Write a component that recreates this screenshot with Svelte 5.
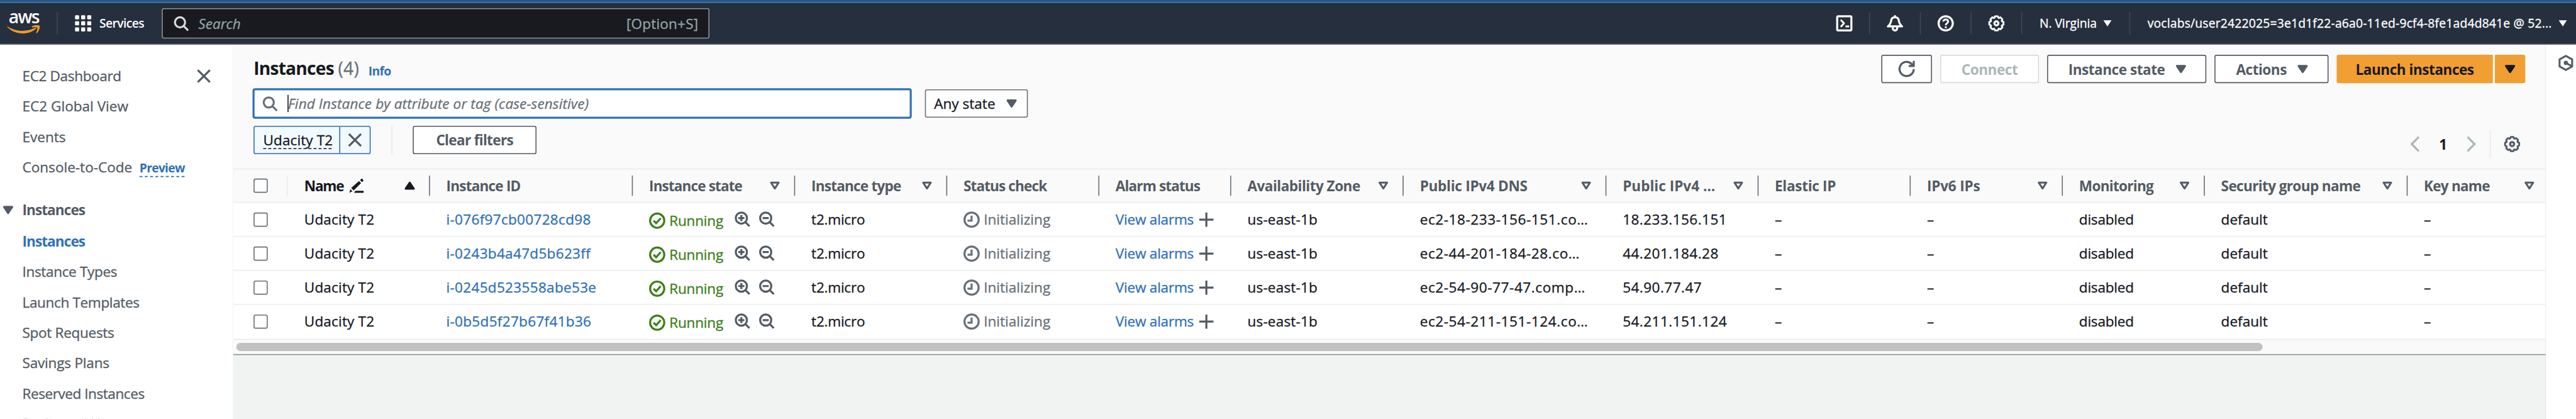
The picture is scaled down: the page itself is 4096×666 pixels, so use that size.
<script>
  const links = [
    ['Instances', -1.15], ['Instance Types', -0.45], ['Launch Templates', -0.45], ['Spot Requests', -0.4],
    ['Savings Plans', -0.25], ['Reserved Instances', -0.57], ['Dedicated Hosts', -0.5]
  ];
  const columns = [
    { label: 'Name', w: 280, edit: true, sort: 'asc', ls: -1.5 },
    { label: 'Instance ID', w: 400, ls: -1 },
    { label: 'Instance state', w: 320, sort: 'none', ls: -1.1 },
    { label: 'Instance type', w: 300, sort: 'none', ls: -1 },
    { label: 'Status check', w: 300, ls: -1.1 },
    { label: 'Alarm status', w: 260, ls: -1.1 },
    { label: 'Availability Zone', w: 340, sort: 'none', ls: -0.65 },
    { label: 'Public IPv4 DNS', w: 400, sort: 'none', ls: -0.35 },
    { label: 'Public IPv4 ...', w: 300, sort: 'none', ls: 0 },
    { label: 'Elastic IP', w: 300, ls: -0.4 },
    { label: 'IPv6 IPs', w: 300, sort: 'none', ls: -0.25 },
    { label: 'Monitoring', w: 280, sort: 'none', ls: -0.9 },
    { label: 'Security group name', w: 400, sort: 'none', ls: -0.8 },
    { label: 'Key name', w: 280, sort: 'none', ls: -1 }
  ];
  const grid = '108px ' + columns.map((c) => c.w + 'px').join(' ');
  const rows = [
    { id: 'i-076f97cb00728cd98', dns: 'ec2-18-233-156-151.co…', ip: '18.233.156.151' },
    { id: 'i-0243b4a47d5b623ff', dns: 'ec2-44-201-184-28.co…', ip: '44.201.184.28' },
    { id: 'i-0245d523558abe53e', dns: 'ec2-54-90-77-47.comp…', ip: '54.90.77.47' },
    { id: 'i-0b5d5f27b67f41b36', dns: 'ec2-54-211-151-124.co…', ip: '54.211.151.124' }
  ];
  // Eight-toothed cog outline, centred in a 16-unit box.
  const cog = Array.from({ length: 8 }, (_, k) =>
    [[-21, 5.8], [-11, 7.1], [11, 7.1], [21, 5.8]].map(([a, r]) => {
      const t = ((k * 45 + a) * Math.PI) / 180;
      return (8 + r * Math.cos(t)).toFixed(2) + ',' + (8 + r * Math.sin(t)).toFixed(2);
    }).join(' ')
  ).join(' ');
</script>

{#snippet gear()}
  <svg class="i32" viewBox="0 0 16 16" fill="none" stroke="currentColor" stroke-width="1.8" stroke-linejoin="round">
    <polygon points={cog} />
    <circle cx="8" cy="8" r="2" stroke-width="2" />
  </svg>
{/snippet}
{#snippet cross()}
  <svg class="i32" viewBox="0 0 16 16" fill="none" stroke="currentColor" stroke-width="2"><path d="M2 2l12 12M14 2L2 14" /></svg>
{/snippet}
{#snippet search()}
  <svg class="i32" viewBox="0 0 16 16" fill="none" stroke="currentColor" stroke-width="2"><circle cx="7" cy="7" r="5" /><path d="M10.5 10.500L15 15" /></svg>
{/snippet}
{#snippet down()}
  <svg class="i32" viewBox="0 0 16 16" fill="currentColor" stroke="currentColor" stroke-width="2" stroke-linejoin="round"><path d="M4 5h8l-4 6z" /></svg>
{/snippet}

<div class="window">
  <div class="page">
    <div class="strip"></div>
    <header>
      <div class="logo">
        <span>aws</span>
        <svg viewBox="0 0 64 22" fill="#f0982c"><path d="M0 2C16 13 38 13 54 5c2-1 3 .8 1.500 2C40 20 15 19 0 4c-1-1-.8-2.500 0-2z" /><path d="M48 2c4-3 12-3 15-1.500 1.500 2-.5 10-5 14.500-1 1-2 .3-1.500-.8C58 10 59.500 6 58.500 4.500S51 3.600 48.800 3.800c-1 0-1.600-1.200-.8-1.800z" /></svg>
      </div>
      <i class="bar"></i>
      <svg class="i32 apps" viewBox="0 0 32 32" fill="#fff">
        {#each [0, 12, 24] as y}{#each [0, 12, 24] as x}<rect {x} {y} width="8" height="8" rx="1.500" />{/each}{/each}
      </svg>
      <b class="services">Services</b>
      <div class="global-search">{@render search()}<em>Search</em><span>[Option+S]</span></div>
      <div class="tools">
        <svg class="i32" viewBox="0 0 16 16" fill="none" stroke="#fff" stroke-width="2" stroke-linejoin="round"><rect x="1" y="1" width="14" height="14" rx="1" /><path d="M4.500 4.500L7.700 8l-3.200 3.500M9.200 11h3.600" stroke-width="1.800" /></svg>
        <i class="bar"></i>
        <svg class="i32" viewBox="0 0 16 16" fill="none" stroke="#fff" stroke-width="2" stroke-linejoin="round"><path d="M8 0v2M1 11h14c-2-1.500-2.800-3-3.200-5.500C11.500 3.200 10 2 8 2S4.500 3.200 4.200 5.500C3.800 8 3 9.500 1 11zM5.800 11.500v1.300a2.200 2.200 0 0 0 4.400 0v-1.300" /></svg>
        <i class="bar"></i>
        <svg class="i32" viewBox="0 0 16 16" fill="none" stroke="#fff" stroke-width="2"><circle cx="8" cy="8" r="7" /><path d="M5.600 6.200c0-1.300 1.100-2 2.400-2s2.400.7 2.400 2c0 1.700-2.300 1.700-2.300 3.700M8.100 11v1.800" stroke-width="1.800" /></svg>
        <i class="bar"></i>
        {@render gear()}
        <i class="bar"></i>
      </div>
      <span class="region">N. Virginia</span>
      <svg class="tri" viewBox="0 0 16 12" fill="#fff"><path d="M0 0h16L8 12z" /></svg>
      <i class="bar b2"></i>
      <span class="account">voclabs/user2422025=3e1d1f22-a6a0-11ed-9cf4-8fe1ad4d841e @ 52...</span>
      <svg class="tri" viewBox="0 0 16 12" fill="#fff"><path d="M0 0h16L8 12z" /></svg>
    </header>

    <div class="body">
      <nav>
        <div class="item first"><span>EC2 Dashboard</span>{@render cross()}</div>
        <div class="item">EC2 Global View</div>
        <div class="item">Events</div>
        <div class="item">Console-to-Code <b class="preview">Preview</b></div>
        <div class="group">{@render down()}<b>Instances</b></div>
        {#each links as [label, ls], n}<div class="item" class:active={n === 0} style:letter-spacing="{ls}px">{label}</div>{/each}
      </nav>

      <main>
        <section class="panel">
          <div class="toprow">
            <h1>Instances <span>(4)</span></h1><b class="info">Info</b>
            <div class="actions">
              <button class="refresh"><svg class="i32" viewBox="0 0 16 16" fill="none" stroke="currentColor" stroke-width="2"><path d="M15 8a7 7 0 1 1-2-4.900L15 5M15 0v5h-5" /></svg></button>
              <button class="off" style:width="195px">Connect</button>
              <button class="menu" style:width="314px">Instance state {@render down()}</button>
              <button class="menu" style:width="225px">Actions {@render down()}</button>
              <div class="split"><button style:width="308px">Launch instances</button><button style:width="60px">{@render down()}</button></div>
            </div>
          </div>
          <div class="filters">
            <div class="find">{@render search()}<i class="caret"></i><em>Find Instance by attribute or tag (case-sensitive)</em></div>
            <button class="state"><span>Any state</span>{@render down()}</button>
          </div>
          <div class="tokens">
            <div class="token"><span><u>Udacity T2</u></span><span class="x">{@render cross()}</span></div>
            <i class="sep"></i>
            <button class="clear">Clear filters</button>
            <div class="pager">
              <svg class="i32" viewBox="0 0 16 16" fill="none" stroke="#aab7b8" stroke-width="2"><path d="M12 1L5 8l7 7" /></svg>
              <b>1</b>
              <svg class="i32" viewBox="0 0 16 16" fill="none" stroke="#aab7b8" stroke-width="2"><path d="M4 1l7 7-7 7" /></svg>
              <i class="sep"></i>
              {@render gear()}
            </div>
          </div>

          <div class="row head" style:grid-template-columns={grid}>
            <div class="check"><i></i></div>
            {#each columns as c}
              <div class="cell" class:dark={c.edit}>
                <b style:letter-spacing="{c.ls}px">{c.label}</b>
                {#if c.edit}<svg class="pencil" viewBox="0 0 28 28" fill="currentColor"><path d="M12 24h16v4H9zM2 21l4 4-6 3zM3.500 18.500L19 5l4 4L8.500 23.500zM21 3l2.500-2.500c1.500-1 5 2.500 4 4L25 7z" /></svg>{/if}
                {#if c.sort}
                  <svg class="sort" viewBox="0 0 20 16" stroke="currentColor" stroke-linejoin="round" stroke-width="3.800" fill={c.sort === 'asc' ? 'currentColor' : 'none'}>
                    {#if c.sort === 'asc'}<path d="M2 14h16L10 2z" />{:else}<path d="M2.500 2h15L10 13.500z" />{/if}
                  </svg>
                {/if}
              </div>
            {/each}
          </div>

          {#each rows as r}
            <div class="row data" style:grid-template-columns={grid}>
              <div class="check"><i></i></div>
              <div class="cell wide">Udacity T2</div>
              <div class="cell link id">{r.id}</div>
              <div class="cell run">
                <svg class="i32" viewBox="0 0 16 16" fill="none" stroke="currentColor" stroke-width="2"><circle cx="8" cy="8" r="7" /><path d="M4.500 8L7 10.500l4.500-5" /></svg>
                <span>Running</span>
                <svg class="i32 mag z1" viewBox="0 0 16 16" fill="none" stroke="currentColor" stroke-width="2"><circle cx="7" cy="7" r="5.500" /><path d="M11 11l4 4M4 7h6M7 4v6" /></svg>
                <svg class="i32 mag" viewBox="0 0 16 16" fill="none" stroke="currentColor" stroke-width="2"><circle cx="7" cy="7" r="5.500" /><path d="M11 11l4 4M4 7h6" /></svg>
              </div>
              <div class="cell tight">t2.micro</div>
              <div class="cell init">
                <svg class="i32" viewBox="0 0 16 16" fill="none" stroke="currentColor" stroke-width="2"><circle cx="8" cy="8" r="7" /><path d="M8 4v5H4" /></svg>
                <span>Initializing</span>
              </div>
              <div class="cell link tight">View alarms <svg class="plus" viewBox="0 0 28 28" stroke="#545b64" stroke-width="4"><path d="M14 0v28M0 14h28" /></svg></div>
              <div class="cell wide">us-east-1b</div>
              <div class="cell dns">{r.dns}</div>
              <div class="cell ip">{r.ip}</div>
              <div class="cell">–</div>
              <div class="cell">–</div>
              <div class="cell tight">disabled</div>
              <div class="cell">default</div>
              <div class="cell">–</div>
            </div>
          {/each}
          <div class="scroll"><div></div></div>
        </section>
      </main>

      <aside>
        <svg class="i32" viewBox="0 0 16 16" fill="none" stroke="currentColor" stroke-width="1.900" stroke-linejoin="round"><path d="M8 1.100l6.200 3.400v7L8 14.900 1.800 11.500v-7z" /><circle cx="8" cy="8" r="1.600" fill="currentColor" stroke-width="1" /><path d="M8 8l5.500 3" /></svg>
      </aside>
    </div>
  </div>
</div>

<style>
  .window { width: 4096px; height: 666px; overflow: hidden; }
  .page { width: 5080px; height: 826px; overflow: hidden; transform: scale(0.8063); transform-origin: 0 0; font: 28px/40px 'Open Sans', sans-serif; color: #16191f; background: #f1f3f3; display: flex; flex-direction: column; -webkit-text-stroke: 0.4px; }
  .page * { box-sizing: border-box; }
  b, h1, button { -webkit-text-stroke: 0; }
  svg { display: block; flex: none; overflow: visible; }
  .i32 { width: 32px; height: 32px; }
  em { font-style: italic; }
  button { font: 700 28px/40px 'Open Sans', sans-serif; color: #545b64; background: #fff; border: 2px solid #545b64; border-radius: 4px; height: 56px; padding: 0; margin: 0; display: flex; align-items: center; justify-content: center; gap: 16px; letter-spacing: -0.6px; white-space: nowrap; flex: none; }
  .menu { padding-left: 8px; }
  .strip { height: 6px; flex: none; background: #25588b; border-bottom: 2px solid #4f7aa3; }
  header { height: 82px; flex: none; background: #262f3e; border-bottom: 2px solid #545b64; display: flex; align-items: center; color: #fff; font-size: 24px; white-space: nowrap; }
  .bar { width: 2px; height: 44px; background: #414750; flex: none; }
  .logo { width: 96px; padding-left: 15px; height: 80px; display: flex; flex-direction: column; padding-top: 12px; flex: none; margin-right: 16px; }
  .logo span { font: 600 35px/30px 'Open Sans', sans-serif; letter-spacing: -2px; padding-left: 2px; -webkit-text-stroke: 0; }
  .logo svg { width: 64px; height: 22px; margin-top: 2px; }
  .apps { margin: 0 16px 0 34px; }
  .services { font-weight: 600; width: 123px; letter-spacing: -0.8px; }
  .global-search { width: 1080px; height: 60px; border: 2px solid #879596; border-radius: 4px; background: #181a1f; display: flex; align-items: center; font-size: 28px; color: #95a5a6; padding: 0 20px; flex: none; }
  .global-search :global(svg) { color: #d5dbdb; margin-right: 18px; }
  .global-search span { margin-left: auto; letter-spacing: 0.2px; }
  .tools { margin-left: 2222px; display: flex; align-items: center; gap: 33px; flex: none; }
  .region { margin-left: 34px; width: 126px; letter-spacing: -0.1px; }
  .tri { width: 16px; height: 12px; }
  .b2 { margin-left: 35px; }
  .account { margin-left: 34px; width: 811px; letter-spacing: 0.2px; }

  .body { flex: 1; display: flex; min-height: 0; }
  nav { width: 460px; flex: none; background: #fff; padding-top: 31px; color: #545b64; height: 738px; overflow: hidden; }
  .item { height: 60px; padding: 10px 44px 0; white-space: nowrap; }
  .first { display: flex; justify-content: space-between; letter-spacing: -0.45px; }
  .first :global(svg) { margin: 5px -2px 0 0; }
  .preview { display: inline-block; font-size: 24px; line-height: 36px; color: #2f71b8; border-bottom: 2px dashed; margin-left: 7px; height: 36px; letter-spacing: -0.95px; }
  .active { color: #2f71b8; font-weight: 700; -webkit-text-stroke: 0; }
  .group { display: flex; height: 86px; padding-top: 34px; letter-spacing: -1.15px; }
  .group :global(svg) { margin: 5px 12px 0 0; }
  main { width: 4560px; flex: none; box-shadow: 0 0 2px #555; z-index: 1; overflow: hidden; background: #f1f3f3; }
  .panel { height: 612px; background: #fafafa; border-bottom: 2px solid #879196; overflow: hidden; width: 4560px; }
  .toprow { display: flex; height: 76px; padding: 20px 40px 0; }
  h1 { font: 700 35px/44px 'Open Sans', sans-serif; margin: 0; padding-top: 4px; letter-spacing: -1px; }
  h1 span { font-weight: 400; color: #687078; letter-spacing: 0.4px; -webkit-text-stroke: 0.4px; }
  .info { font-size: 24px; color: #2f71b8; margin: 12px 0 0 18px; letter-spacing: -0.8px; }
  .actions { margin-left: auto; display: flex; gap: 16px; height: 56px; }
  .refresh { width: 100px; }
  .off { border-color: #d5dbdb; color: #aab7b8; }
  .split { display: flex; gap: 4px; }
  .split button { background: #f19e33; border: 0; color: #16191f; border-radius: 4px 0 0 4px; }
  .split button:last-child { border-radius: 0 4px 4px 0; }
  .filters { padding: 10px 38px 0; display: flex; gap: 26px; height: 84px; }
  .find { width: 1300px; height: 60px; background: #fff; border: 4px solid #2f71b8; border-radius: 5px; display: flex; align-items: center; color: #687078; padding-left: 14px; letter-spacing: 0.12px; }
  .caret { width: 2px; height: 34px; background: #16191f; margin: 0 -1px 0 19px; }
  .state { margin-top: 2px; width: 203px; font-weight: 400; color: #16191f; border-color: #687078; justify-content: space-between; padding: 0 16px; letter-spacing: 0; -webkit-text-stroke: 0.4px; }
  .state :global(svg) { color: #545b64; }
  .tokens { display: flex; padding: 0 40px; height: 84px; }
  .token { display: flex; width: 231px; height: 56px; border: 2px solid #2f71b8; border-radius: 4px; background: #f2f9ff; }
  .token span { flex: 1; padding: 6px 0 0 17px; }
  .token u { text-decoration: none; display: block; width: 135px; height: 38px; border-bottom: 2px dashed #16191f; white-space: nowrap; letter-spacing: 0.1px; }
  .token .x { flex: none; width: 60px; border-left: 2px solid #2f71b8; padding: 10px 13px; color: #545b64; }
  .sep { width: 2px; height: 56px; background: #e6e9e9; margin: 0 40px 0 41px; flex: none; }
  .clear { width: 244px; letter-spacing: -0.85px; }
  .pager { margin-left: auto; display: flex; align-items: center; height: 56px; margin-top: 8px; margin-right: 10px; color: #545b64; }
  .pager b { color: #16191f; margin: 0 32px; }
  .pager .sep { margin: 0 26px 0 20px; }

  .row { display: grid; width: 5000px; background: #fff; border-bottom: 2px solid #eaebeb; height: 67px; }
  .data:nth-last-child(2) { height: 69px; }
  .head { background: #fafafa; border-top: 2px solid #eaebeb; height: 68px; color: #545b64; }
  .head .check { border-right: 2px solid #eaeded; height: 40px; margin-top: 12px; padding-top: 6px; }
  .check { padding: 19px 0 0 40px; }
  .check i { display: block; width: 28px; height: 28px; border: 2px solid #687078; border-radius: 4px; background: #fff; }
  .cell { padding: 12px 0 0 32px; white-space: nowrap; min-width: 0; display: flex; }
  .head .cell { height: 40px; margin-top: 12px; padding: 0 28px 0 32px; border-right: 2px solid #687078; align-items: center; }
  .head .dark { color: #16191f; }
  .pencil { width: 28px; height: 28px; margin-left: 11px; }
  .sort { width: 20px; height: 16px; margin-left: auto; }
  .link { color: #2f71b8; }
  .wide { letter-spacing: 0.2px; }
  .tight { letter-spacing: -0.3px; }
  .id { letter-spacing: 0.35px; }
  .dns { letter-spacing: 0.7px; }
  .ip { letter-spacing: 0.55px; }
  .run { color: #3b8019; padding-top: 14px; letter-spacing: -0.3px; }
  .run > svg:first-child { margin: 5px 8px 0 0; }
  .mag { color: #545b64; margin: 2px 0 0 16px; }
  .z1 { margin-left: 22px; }
  .init { color: #687078; }
  .init svg { margin: 5px 8px 0 0; }
  .plus { width: 28px; height: 28px; margin: 7px 0 0 11px; }
  .scroll { padding: 6px 0 0 6px; }
  .scroll div { width: 3996px; height: 16px; border-radius: 8px; background: #c1c1c1; }
  aside { flex: 1; background: #fff; padding: 20px 0 0 24px; color: #545b64; }
</style>
